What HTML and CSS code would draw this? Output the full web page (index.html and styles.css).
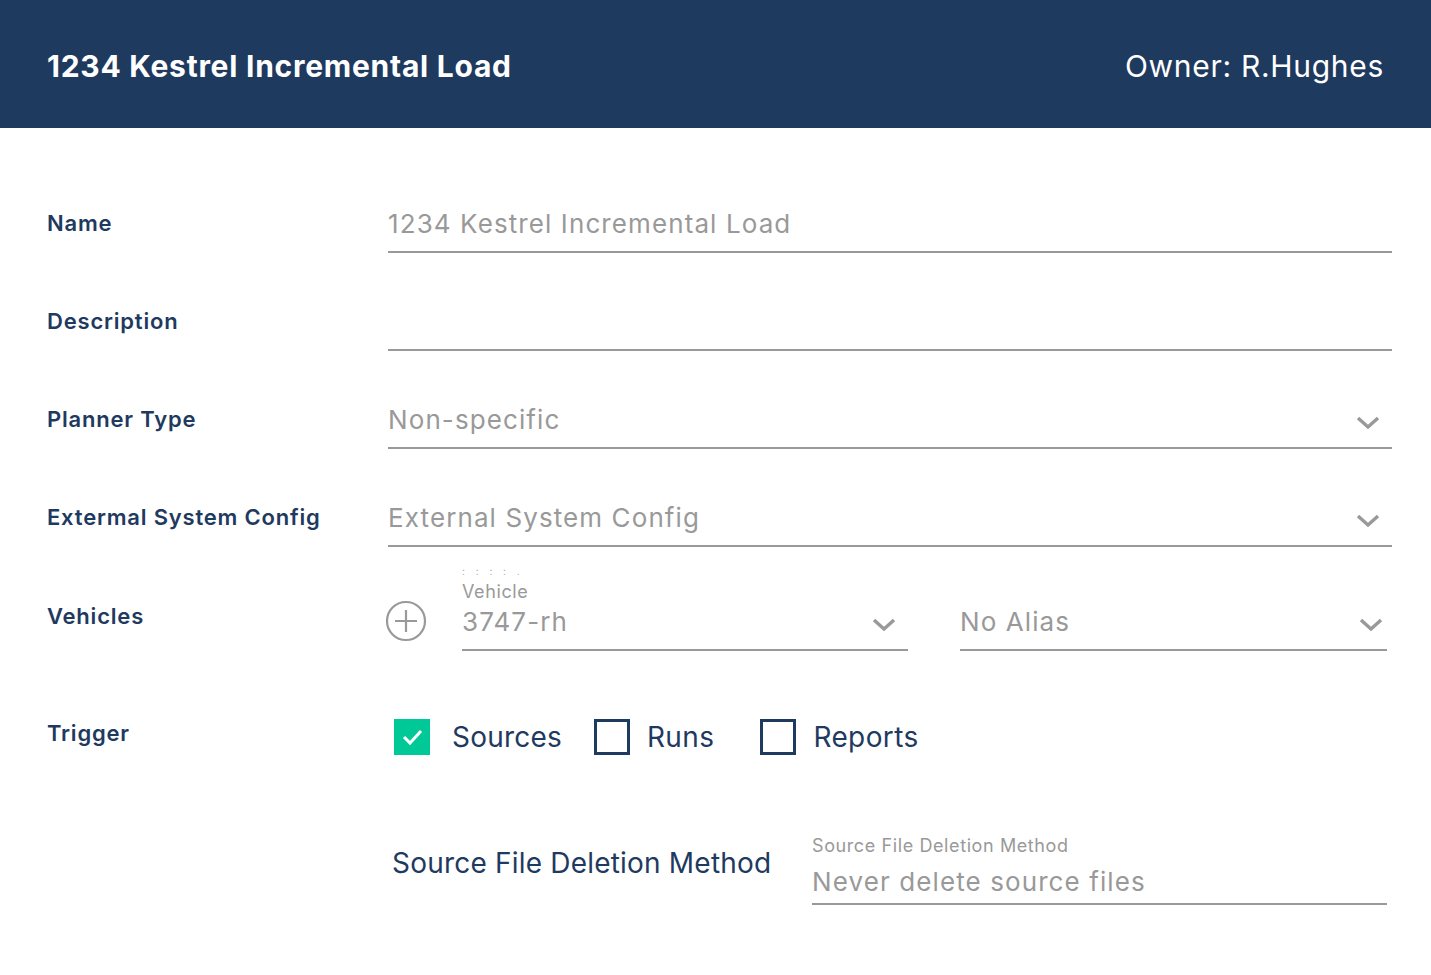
FILE: index.html
```html
<!DOCTYPE html>
<html>
    <head>
        <meta charset="utf-8">
        <title>1234 Kestrel Incremental Load</title>
        <link rel="stylesheet" href="styles.css">
    </head>
    <body>
        <div class='topbar'>
            <div class='topbar-title'>1234 Kestrel Incremental Load</div>
            <div class='topbar-owner'>Owner: R.Hughes</div>
        </div>

        <div class='form'>
            <div class='row'>
                <div class='label'>Name</div>
                <div class='field'>
                    <div class='field-val'>1234 Kestrel Incremental Load</div>
                </div>
            </div>
            <div class='row'>
                <div class='label'>Description</div>
                <div class='field'>
                    <div class='field-val'>&nbsp;</div>
                </div>
            </div>
            <div class='row'>
                <div class='label'>Planner Type</div>
                <div class='field'>
                    <div class='field-val'>Non-specific</div>
                    <svg class='chev' viewBox='0 0 24 14'><path d='M2 2 L12 11 L22 2'/></svg>
                </div>
            </div>
            <div class='row'>
                <div class='label'>Extermal System Config</div>
                <div class='field'>
                    <div class='field-val'>External System Config</div>
                    <svg class='chev' viewBox='0 0 24 14'><path d='M2 2 L12 11 L22 2'/></svg>
                </div>
            </div>
            <div class='row row-vehicles'>
                <div class='label'>Vehicles</div>
                <div class='vehicles'>
                    <svg class='add' viewBox='0 0 42 42'>
                        <circle cx='21' cy='21' r='19'/>
                        <path d='M21 10 V32 M10 21 H32'/>
                    </svg>
                    <div class='field field-vehicle'>
                        <div class='dots'>: : : : .</div>
                        <div class='field-small'>Vehicle</div>
                        <div class='field-val'>3747-rh</div>
                        <svg class='chev' viewBox='0 0 24 14'><path d='M2 2 L12 11 L22 2'/></svg>
                    </div>
                    <div class='field field-alias'>
                        <div class='field-val'>No Alias</div>
                        <svg class='chev' viewBox='0 0 24 14'><path d='M2 2 L12 11 L22 2'/></svg>
                    </div>
                </div>
            </div>
            <div class='row row-trigger'>
                <div class='label'>Trigger</div>
                <div class='checks'>
                    <div class='check'>
                        <span class='box box-on'>
                            <svg viewBox='0 0 36 36'><path d='M10 18 L16 24 L27 12'/></svg>
                        </span>
                        <span class='check-text'>Sources</span>
                    </div>
                    <div class='check'>
                        <span class='box'></span>
                        <span class='check-text'>Runs</span>
                    </div>
                    <div class='check'>
                        <span class='box'></span>
                        <span class='check-text'>Reports</span>
                    </div>
                </div>
            </div>
            <div class='row row-deletion'>
                <div class='label'></div>
                <div class='deletion'>
                    <div class='deletion-label'>Source File Deletion Method</div>
                    <div class='field field-deletion'>
                        <div class='field-small'>Source File Deletion Method</div>
                        <div class='field-val'>Never delete source files</div>
                    </div>
                </div>
            </div>
        </div>
    </body>
</html>
```

FILE: styles.css
```css
html {
    box-sizing: border-box;
}
*, *:before, *:after {
    box-sizing: inherit;
}

body {
    margin: 0;
    font-family: Inter, "Liberation Sans", sans-serif;
    background-color: white;
    color: #1f3a5f;
}

.topbar {
    height: 128px;
    background-color: #1f3a5f;
    color: white;
    display: flex;
    align-items: center;
    justify-content: space-between;
    padding: 4px 47px 0 47px;
}

.topbar-title {
    font-size: 30px;
    font-weight: bold;
    letter-spacing: 0.75px;
}

.topbar-owner {
    font-size: 30px;
    letter-spacing: 0.7px;
}

.form {
    padding: 68px 39px 0 47px;
}

.row {
    display: flex;
    align-items: flex-start;
    height: 98px;
}

.label {
    width: 341px;
    flex: none;
    font-size: 22px;
    font-weight: 600;
    letter-spacing: 0.8px;
    line-height: 28px;
    padding-top: 13px;
}

.field {
    flex: 1;
    position: relative;
    border-bottom: 2px solid #999;
    height: 57px;
    display: flex;
    flex-direction: column;
    justify-content: flex-end;
    padding-bottom: 12px;
}

.field-val {
    font-size: 26px;
    color: #999;
    line-height: 30px;
    letter-spacing: 1.1px;
}

.field-small {
    font-size: 18px;
    color: #999;
    line-height: 22px;
    letter-spacing: 0.6px;
}

.chev {
    position: absolute;
    right: 12px;
    bottom: 17px;
    width: 24px;
    height: 14px;
    fill: none;
    stroke: #999;
    stroke-width: 3.4;
}

.row-vehicles {
    height: 118px;
}

.row-vehicles .label {
    padding-top: 14px;
}

.vehicles {
    flex: 1;
    display: flex;
    align-items: flex-end;
    margin-top: -27px;
}

.add {
    width: 42px;
    height: 42px;
    margin-left: -3px;
    margin-right: 35px;
    margin-bottom: 9px;
    fill: none;
    stroke: #999;
    stroke-width: 2.2;
}

.field-vehicle {
    flex: none;
    width: 446px;
    height: 90px;
    padding-bottom: 12px;
}

.field-vehicle .field-small {
    margin-bottom: 4px;
}

.dots {
    font-size: 10px;
    color: #aaa;
    letter-spacing: 4px;
    line-height: 14px;
    margin-bottom: 3px;
}

.field-alias {
    flex: none;
    width: 427px;
    margin-left: 52px;
    height: 57px;
}

.field-alias .chev {
    right: 4px;
}

.row-trigger {
    height: 126px;
}

.checks {
    display: flex;
    align-items: center;
    padding-left: 6px;
    padding-top: 13px;
}

.check {
    display: flex;
    align-items: center;
}

.check + .check {
    margin-left: 32px;
}

.check:nth-child(3) {
    margin-left: 46px;
}

.box {
    width: 36px;
    height: 36px;
    border: 3px solid #1f3a5f;
    display: inline-block;
}

.box-on {
    border: none;
    background-color: #00c896;
}

.box-on svg {
    width: 36px;
    height: 36px;
    fill: none;
    stroke: white;
    stroke-width: 3;
}

.check-text {
    font-size: 28px;
    margin-left: 17px;
    letter-spacing: 0.4px;
    color: #1f3a5f;
}

.check:first-child .check-text {
    margin-left: 22px;
    letter-spacing: 0.2px;
}

.row-deletion {
    height: auto;
}

.deletion {
    flex: 1;
    display: flex;
    align-items: flex-end;
}

.deletion-label {
    font-size: 28px;
    width: 424px;
    padding-left: 4px;
    padding-bottom: 25px;
    letter-spacing: 0.2px;
}

.field-deletion {
    flex: none;
    width: 575px;
    height: 73px;
    padding-bottom: 6px;
}

.field-deletion .field-small {
    margin-bottom: 10px;
}
```
